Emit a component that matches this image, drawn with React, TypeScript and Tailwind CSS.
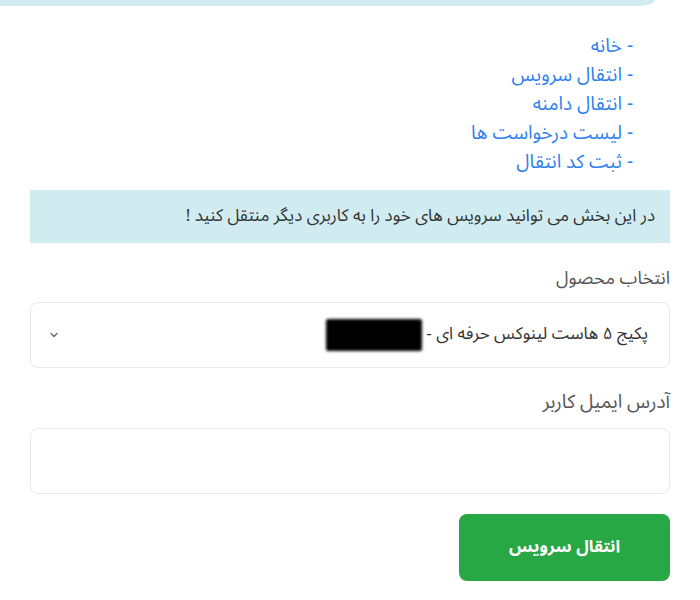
import { ChevronDown } from 'lucide-react'

const links = ['خانه', 'انتقال سرویس', 'انتقال دامنه', 'لیست درخواست ها', 'ثبت کد انتقال']

export default function App() {
  return (
    <div
      dir="rtl"
      className="w-[700px] h-[600px] bg-white overflow-hidden"
      style={{ fontFamily: '"Noto Sans Arabic", "DejaVu Sans", "Noto Sans", sans-serif' }}
    >
      {/* top card edge */}
      <div dir="ltr">
        <div className="h-[6px] w-[655px] bg-[#d1ecf1] rounded-br-[16px_6px]" />
      </div>

      <div className="px-[30px]">
        {/* Links */}
        <ul className="mt-[26px] pr-[37px] text-[19px] leading-[29px] text-[#2f7fee]">
          {links.map((l) => (
            <li key={l}>
              <a href="#" className="hover:underline">
                - {l}
              </a>
            </li>
          ))}
        </ul>

        {/* Info alert */}
        <div className="mt-[13px] h-[53px] bg-[#d1ecf1] flex items-center px-[15px] text-[17px] text-[#333]">
          در این بخش می توانید سرویس های خود را به کاربری دیگر منتقل کنید !
        </div>

        {/* Product select */}
        <label className="block mt-[23px] text-[18px] leading-[24px] text-[#555]">انتخاب محصول</label>
        <div className="mt-[12px] h-[66px] border border-[#e6e8ee] rounded-[8px] flex items-center justify-between pr-[21px] pl-[17px]">
          <div className="flex items-center gap-[4px] text-[17px] text-[#333]">
            <span>پکیج ۵ هاست لینوکس حرفه ای -</span>
            <span className="block w-[96px] h-[32px] bg-black rounded-[2px] blur-[1.5px]" />
          </div>
          <ChevronDown className="w-[12px] h-[12px] text-[#666]" strokeWidth={2.5} />
        </div>

        {/* Email */}
        <label className="block mt-[22px] text-[19px] leading-[24px] text-[#555]">آدرس ایمیل کاربر</label>
        <input
          type="text"
          className="block mt-[14px] w-full h-[66px] border border-[#e6e8ee] rounded-[8px] outline-none px-4"
        />

        {/* Submit */}
        <div className="mt-[20px] flex">
          <button className="w-[211px] h-[67px] bg-[#28a745] rounded-[8px] text-white font-bold text-[17px]">
            انتقال سرویس
          </button>
        </div>
      </div>
    </div>
  )
}
